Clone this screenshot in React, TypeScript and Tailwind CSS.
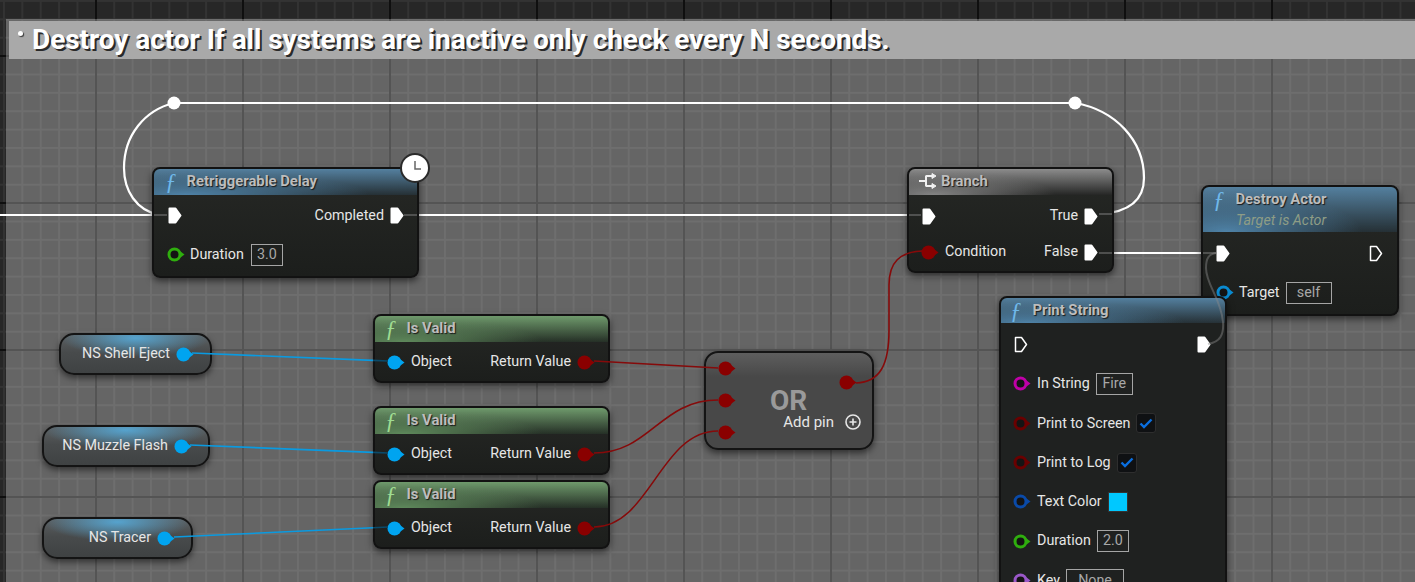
import type { ReactNode } from "react";

function ExecPin({ filled = false }: { filled?: boolean }) {
  return (
    <svg width="14" height="17" viewBox="0 0 14 17" className="shrink-0">
      <path
        d="M1.5 1.5 H7.5 L12.5 8.5 L7.5 15.5 H1.5 Z"
        fill={filled ? "#ffffff" : "none"}
        stroke="#ffffff"
        strokeWidth={filled ? 2 : 1.5}
        strokeLinejoin="round"
      />
    </svg>
  );
}

function DataPin({ color, ring = false }: { color: string; ring?: boolean }) {
  return (
    <svg width="18" height="15" viewBox="0 0 18 15" className="shrink-0">
      <path d="M13.5 4.5 L17.5 7.5 L13.5 10.5 Z" fill={color} />
      {ring ? (
        <circle cx="7.5" cy="7.5" r="5.5" fill="#141414" stroke={color} strokeWidth="3" />
      ) : (
        <circle cx="7.5" cy="7.5" r="7" fill={color} />
      )}
    </svg>
  );
}

function Fx({ className }: { className: string }) {
  return <span className={`mr-[3px] -ml-[3px] font-['Liberation_Serif',serif] text-[23px] leading-none italic ${className}`}>ƒ</span>;
}

function Title({ children }: { children: ReactNode }) {
  return <span className="text-[14.8px] font-bold text-[#bdbdbd] [text-shadow:1px_1px_1px_#1a1a1a]">{children}</span>;
}

function Field({ className, children }: { className: string; children: ReactNode }) {
  return (
    <span className={`flex h-[22px] items-center justify-center border border-[#a5a5a5] text-[14.3px] text-[#a8a8a8] ${className}`}>
      {children}
    </span>
  );
}

function Check() {
  return (
    <span className="flex h-[20px] w-[20px] items-center justify-center rounded-[3px] border border-[#2e2e2e] bg-[#0f1113]">
      <svg width="14" height="11" viewBox="0 0 14 11">
        <path d="M1.5 5.5 L5 9 L12.5 1.5" fill="none" stroke="#0a6fe0" strokeWidth="2.4" />
      </svg>
    </span>
  );
}

const blueHead =
  "bg-[radial-gradient(ellipse_70%_90%_at_12%_100%,#4f83a8_0%,rgba(79,131,168,0)_100%),linear-gradient(180deg,#54809f_0%,rgba(40,58,70,0.55)_100%)]";
const greenHead =
  "bg-[radial-gradient(ellipse_60%_90%_at_12%_100%,#5f8a5c_0%,rgba(95,138,92,0)_100%),linear-gradient(180deg,#6f9a6c_0%,rgba(40,56,42,0.6)_100%)]";
const grayHead =
  "bg-[radial-gradient(ellipse_60%_90%_at_12%_100%,#858585_0%,rgba(133,133,133,0)_100%),linear-gradient(180deg,#8c8c8c_0%,rgba(40,40,40,0.6)_100%)]";

function GraphNode({ className, head, headHeight, children, header }: { className: string; head: string; headHeight: string; header: ReactNode; children: ReactNode }) {
  return (
    <div className={`absolute rounded-[8px] border-2 border-[#121212] bg-[linear-gradient(180deg,#262825_0%,#1c1e1c_100%)] shadow-[0_3px_7px_rgba(0,0,0,0.55)] ${className}`}>
      <div className={`rounded-t-[6px] ${head} ${headHeight}`}>{header}</div>
      {children}
    </div>
  );
}

function Row({ className, children }: { className: string; children: ReactNode }) {
  return <div className={`flex items-center justify-between text-[14.3px] text-[#e6e6e6] ${className}`}>{children}</div>;
}

function IsValid({ className }: { className: string }) {
  return (
    <GraphNode
      className={`left-[373px] h-[69px] w-[237px] ${className}`}
      head={greenHead}
      headHeight="h-[26px]"
      header={
        <div className="flex h-full items-center gap-[7px] pb-[2px] pl-[13px]">
          <Fx className="text-[#9fdc92]" />
          <Title>Is Valid</Title>
        </div>
      }
    >
      <Row className="mt-[1px] h-[38px] pr-[13px] pl-[12px]">
        <span className="flex items-center gap-[6px]">
          <DataPin color="#00a4f0" />
          Object
        </span>
        <span className="flex items-center gap-[6px]">
          Return Value
          <DataPin color="#8a0000" />
        </span>
      </Row>
    </GraphNode>
  );
}

function VarPill({ className, children }: { className: string; children: ReactNode }) {
  return (
    <div
      className={`absolute flex h-[42px] items-center justify-end gap-[6px] rounded-[15px] border-2 border-[#141414] bg-[radial-gradient(ellipse_50%_50%_at_50%_8%,rgba(85,175,225,0.85)_0%,rgba(90,170,215,0)_100%),linear-gradient(180deg,#5c6062_0%,#484b4c_45%,#3f4243_100%)] text-[14.3px] text-[#e6e6e6] shadow-[0_3px_6px_rgba(0,0,0,0.5)] ${className}`}
    >
      {children}
      <DataPin color="#00a4f0" />
    </div>
  );
}

function Wires() {
  return (
    <svg className="absolute inset-0 h-full w-full" viewBox="0 0 1415 582" fill="none">
      <g stroke="#ffffff" strokeWidth="2.2">
        <path d="M0 215 H170" />
        <path d="M160 215 C136 211 124 190 124 168 C124 135 145 110 174 103 H1075 C1115 110 1144 140 1144 178 C1144 200 1130 212 1100 214" />
        <path d="M398 215 H925" />
        <path d="M1095 253 H1215" />
      </g>
      <circle cx="174" cy="103" r="6.5" fill="#ffffff" />
      <circle cx="1075" cy="103" r="6.5" fill="#ffffff" />
    </svg>
  );
}

// wires that stay visible where they cross a node, drawn after the nodes
function TopWires() {
  return (
    <svg className="absolute inset-0 h-full w-full" viewBox="0 0 1415 582" fill="none">
      <g stroke="#8a8a8a" strokeOpacity="0.45" strokeWidth="2">
        <path d="M154 215 H167 M404 215 H417 M909 215 H921 M1099 214 H1112 M1099 253 H1112 M1203 253 H1216" />
        <path d="M1208 344 C1220 342 1224 335 1223 322 C1221 298 1206 285 1206 268 C1206 258 1209 254 1216 253" />
      </g>
      <g stroke="#860a0a" strokeWidth="1.6">
        <path d="M594 361 L718 368" />
        <path d="M594 453 C650 453 660 400 718 400" />
        <path d="M594 527 C650 527 660 431 718 431" />
        <path d="M856 383 C880 382 889 365 889 330 V285 C889 262 900 252 922 251" />
      </g>
      <g stroke="#0a9ae0" strokeWidth="1.6">
        <path d="M192 353 L373 360.4" />
        <path d="M190 445 L373 452.4" />
        <path d="M174 537 L373 527.8" />
      </g>
      <g stroke="#0a4a6a" strokeWidth="1.6">
        <path d="M373 360.4 L388 361 M373 452.4 L388 453 M373 527.8 L388 527" />
      </g>
    </svg>
  );
}

export default function App() {
  return (
    <div className="relative h-[582px] w-[1415px] overflow-hidden bg-[#272727] bg-[linear-gradient(to_right,#0f0f0f_2px,transparent_2px),linear-gradient(to_bottom,#0f0f0f_2px,transparent_2px),linear-gradient(to_right,#333333_2px,transparent_2px),linear-gradient(to_bottom,#333333_2px,transparent_2px)] bg-position-[95px_0,0_55px,3px_0,0_0] bg-size-[147px_147px,147px_147px,18.375px_18.375px,18.375px_18.375px] font-['Roboto',sans-serif]">
      {/* comment box */}
      <div className="absolute top-[19px] right-0 bottom-0 left-[6px] bg-white/[0.29] pt-[2px] pl-[3px]">
        <div className="flex h-[38px] items-center bg-[#a9a9a9] pl-[9px]">
          <span className="mb-[14px] h-[5px] w-[5px] rounded-full bg-white shadow-[1px_1px_1px_#333]" />
          <span className="ml-[9px] text-[28px] font-bold tracking-[-0.05px] whitespace-nowrap text-white [text-shadow:2px_2px_0_#2a2a2a]">
            Destroy actor If all systems are inactive only check every N seconds.
          </span>
        </div>
      </div>

      <Wires />

      <GraphNode
        className="top-[167px] left-[152px] h-[111px] w-[267px]"
        head={blueHead}
        headHeight="h-[26px]"
        header={
          <div className="flex h-full items-center gap-[7px] pb-[2px] pl-[14px]">
            <Fx className="text-[#6fb8ea]" />
            <Title>Retriggerable Delay</Title>
          </div>
        }
      >
        <Row className="mt-[1px] h-[39px] pr-[13px] pl-[14px]">
          <ExecPin filled />
          <span className="flex items-center gap-[6px]">
            Completed
            <ExecPin filled />
          </span>
        </Row>
        <Row className="h-[39px] justify-start gap-[5px] pl-[13px]">
          <DataPin color="#2fae0e" ring />
          Duration
          <Field className="ml-[2px] w-[32px]">3.0</Field>
        </Row>
      </GraphNode>
      <div className="absolute top-[153px] left-[400px] flex h-[30px] w-[30px] items-center justify-center rounded-full border-2 border-[#2a2a2a] bg-white">
        <svg width="14" height="14" viewBox="0 0 14 14">
          <path d="M7 0 V8 H13" fill="none" stroke="#666666" strokeWidth="1.5" />
        </svg>
      </div>

      <GraphNode
        className="top-[167px] left-[907px] h-[106px] w-[207px]"
        head={grayHead}
        headHeight="h-[26px]"
        header={
          <div className="flex h-full items-center gap-[4px] pb-[2px] pl-[10px]">
            <svg width="18" height="16" viewBox="0 0 18 16" fill="none" stroke="#f0f0f0" strokeWidth="2">
              <path d="M0 8 H7 M7 2.5 V13.5 M7 3 H14 M7 13 H14" />
              <path d="M13 0.5 L17 3 L13 5.5 Z M13 10.5 L17 13 L13 15.5 Z" fill="#f0f0f0" strokeWidth="1" />
            </svg>
            <Title>Branch</Title>
          </div>
        }
      >
        <Row className="mt-[3px] h-[36px] pr-[14px] pl-[13px]">
          <ExecPin filled />
          <span className="flex items-center gap-[6px]">
            True
            <ExecPin filled />
          </span>
        </Row>
        <Row className="h-[36px] pr-[14px] pl-[12px]">
          <span className="flex items-center gap-[6px]">
            <DataPin color="#8a0000" />
            Condition
          </span>
          <span className="flex items-center gap-[6px]">
            False
            <ExecPin filled />
          </span>
        </Row>
      </GraphNode>

      <GraphNode
        className="top-[185px] left-[1201px] h-[131px] w-[198px]"
        head={blueHead}
        headHeight="h-[45px]"
        header={
          <div className="pt-[1px] pl-[13px]">
            <div className="flex items-center gap-[8px]">
              <Fx className="text-[#6fb8ea]" />
              <Title>Destroy Actor</Title>
            </div>
            <div className="mt-[1px] pl-[20px] text-[14.3px] leading-[16px] text-[#8e9d86] italic">Target is Actor</div>
          </div>
        }
      >
        <Row className="mt-[2px] h-[39px] pr-[14px] pl-[13px]">
          <ExecPin filled />
          <ExecPin />
        </Row>
        <Row className="h-[39px] justify-start gap-[5px] pl-[13px]">
          <DataPin color="#0a8ad0" ring />
          Target
          <Field className="ml-[1px] w-[46px]">self</Field>
        </Row>
      </GraphNode>

      <GraphNode
        className="top-[296px] left-[999px] h-[320px] w-[228px]"
        head={blueHead}
        headHeight="h-[25px]"
        header={
          <div className="flex h-full items-center gap-[8px] pl-[12px]">
            <Fx className="text-[#6fb8ea]" />
            <Title>Print String</Title>
          </div>
        }
      >
        <div className="rounded-b-[6px] bg-[#1f2120] pt-[2px]">
          <Row className="h-[39.3px] pr-[14px] pl-[13px]">
            <ExecPin />
            <ExecPin filled />
          </Row>
          <Row className="h-[39.3px] justify-start gap-[6px] pl-[12px]">
            <DataPin color="#c000a8" ring />
            In String
            <Field className="w-[37px]">Fire</Field>
          </Row>
          <Row className="h-[39.3px] justify-start gap-[6px] pl-[12px]">
            <DataPin color="#6a0000" ring />
            Print to Screen
            <Check />
          </Row>
          <Row className="h-[39.3px] justify-start gap-[6px] pl-[12px]">
            <DataPin color="#6a0000" ring />
            Print to Log
            <Check />
          </Row>
          <Row className="h-[39.3px] justify-start gap-[6px] pl-[12px]">
            <DataPin color="#0a4aa8" ring />
            Text Color
            <span className="h-[20px] w-[20px] border border-[#333333] bg-[#00c8ff]" />
          </Row>
          <Row className="h-[39.3px] justify-start gap-[6px] pl-[12px]">
            <DataPin color="#2fae0e" ring />
            Duration
            <Field className="w-[32px]">2.0</Field>
          </Row>
          <Row className="h-[39.3px] justify-start gap-[6px] pl-[12px]">
            <DataPin color="#9a58c8" ring />
            Key
            <Field className="w-[58px]">None</Field>
          </Row>
        </div>
      </GraphNode>

      <IsValid className="top-[314px]" />
      <IsValid className="top-[406px]" />
      <IsValid className="top-[480px]" />

      <VarPill className="top-[333px] left-[59px] w-[153px] pr-[16px]">NS Shell Eject</VarPill>
      <VarPill className="top-[425px] left-[42px] w-[168px] pr-[16px]">NS Muzzle Flash</VarPill>
      <VarPill className="top-[517px] left-[42px] w-[151px] pr-[16px]">NS Tracer</VarPill>

      {/* OR node */}
      <div className="absolute top-[351px] left-[704px] flex h-[99px] w-[170px] justify-between rounded-[14px] border-2 border-[#141414] bg-[linear-gradient(180deg,#5e5e5e_0%,#484848_25%,#484848_100%)] pr-[11px] pl-[12px] shadow-[0_3px_7px_rgba(0,0,0,0.55)]">
        <div className="flex flex-col gap-[17px] pt-[8px]">
          <DataPin color="#8a0000" />
          <DataPin color="#8a0000" />
          <DataPin color="#8a0000" />
        </div>
        <div className="flex flex-col items-end justify-between pt-[22px] pb-[15px]">
          <span className="mr-[4px]">
            <DataPin color="#8a0000" />
          </span>
          <span className="flex items-center gap-[11px] text-[15px] text-[#e6e6e6]">
            Add pin
            <svg width="16" height="16" viewBox="0 0 16 16" fill="none" stroke="#e6e6e6" strokeWidth="1.6">
              <circle cx="8" cy="8" r="7" />
              <path d="M8 4.5 V11.5 M4.5 8 H11.5" />
            </svg>
          </span>
        </div>
        <span className="absolute top-[35px] left-[64px] text-[28px] leading-[26px] font-bold text-[#9a9a9a]">OR</span>
      </div>

      <TopWires />
    </div>
  );
}
